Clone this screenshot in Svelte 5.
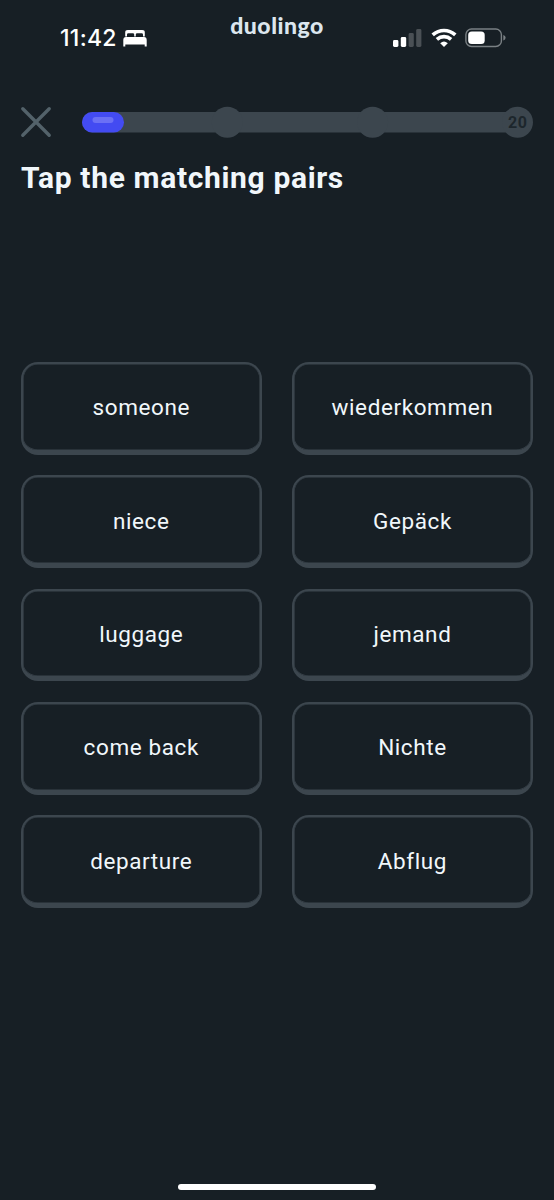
<script lang="ts">
	const rows = [
		['someone', 'wiederkommen'],
		['niece', 'Gepäck'],
		['luggage', 'jemand'],
		['come back', 'Nichte'],
		['departure', 'Abflug']
	];
</script>

<main class="screen">
	<header class="status">
		<div class="clock">
			<span class="time">11:42</span>
			<svg class="bed" width="24" height="18" viewBox="0 0 24 18" fill="white" aria-hidden="true">
				<path d="M2.2 7.4V3.4Q2.2 1 4.8 1H19.2Q21.8 1 21.8 3.4V7.4H20V5.6Q20 4.2 18.6 4.2H14.2Q12.8 4.2 12.8 5.6V7.4H11.2V5.6Q11.2 4.2 9.8 4.2H5.4Q4 4.2 4 5.6V7.4Z" />
				<path d="M3 8H21Q23.7 8 23.7 11V17.4H21.7V15.4H2.3V17.4H.3V11Q.3 8 3 8Z" />
			</svg>
		</div>
		<div class="brand">duolingo</div>
		<div class="indicators">
			<svg width="29" height="20" viewBox="0 0 29 20" aria-hidden="true">
				<rect x="0" y="12" width="5.4" height="7" rx="1.4" fill="white" />
				<rect x="7.8" y="9" width="5.4" height="10" rx="1.4" fill="white" />
				<rect x="15.6" y="5" width="5.2" height="14" rx="1.4" fill="#4a5055" />
				<rect x="23.2" y="1" width="5.2" height="18" rx="1.4" fill="#4a5055" />
			</svg>
			<svg class="wifi" width="26" height="20" viewBox="0 0 26 20" fill="none" stroke="white" stroke-width="3.7" aria-hidden="true">
				<path d="M1.7 6.9Q6.8 2.5 13 2.5T24.3 6.9" />
				<path d="M5.9 11.3Q9.1 8.6 13 8.6T20.1 11.3" />
				<path d="M13 19L9.2 15.2Q13 11.8 16.8 15.2Z" fill="white" stroke="none" />
			</svg>
			<svg class="battery" width="41" height="20" viewBox="0 0 41 20" aria-hidden="true">
				<rect x=".9" y="1" width="35.5" height="17.5" rx="5.6" fill="none" stroke="#7a8084" stroke-width="1.4" />
				<rect x="3.2" y="3.4" width="16.5" height="12.7" rx="3.6" fill="white" />
				<path d="M38.3 7Q40.6 7.5 40.6 9.8T38.3 12.6Z" fill="#7a8084" />
			</svg>
		</div>
	</header>

	<div class="lesson">
		<svg width="32" height="32" viewBox="0 0 32 32" aria-hidden="true">
			<path d="M2.8 2.8L29.2 29.2M29.2 2.8L2.8 29.2" stroke="#53626a" stroke-width="3.4" stroke-linecap="round" />
		</svg>
		<svg class="progress" width="452" height="32" viewBox="0 0 452 32" aria-hidden="true">
			<rect x="0" y="6" width="445" height="20.5" rx="10.2" fill="#3c464e" />
			<circle cx="145.3" cy="16.3" r="15.5" fill="#3c464e" />
			<circle cx="290.6" cy="16.3" r="15.5" fill="#3c464e" />
			<circle cx="435.5" cy="16.3" r="15.5" fill="#3c464e" />
			<rect x="0" y="6" width="42" height="20.5" rx="10.2" fill="#434bf2" />
			<rect x="10.5" y="11" width="21" height="6" rx="3" fill="#6b70f5" />
			<text x="426" y="22" textLength="19" class="count">20</text>
		</svg>
	</div>

	<h1>Tap the matching pairs</h1>

	<div class="pairs">
		{#each rows as row}
			{#each row as word}
				<button>{word}</button>
			{/each}
		{/each}
	</div>

	<div class="home"></div>
</main>

<style>
	:global(body) {
		background: #171f25;
	}

	.screen {
		box-sizing: border-box;
		width: 554px;
		height: 1200px;
		display: flex;
		flex-direction: column;
		background: #171f25;
		color: #f1f7fb;
		font-family: Roboto, sans-serif;
		overflow: hidden;
	}

	.status {
		display: grid;
		grid-template-columns: 170px 1fr 170px;
		height: 76px;
		color: white;
	}

	.clock {
		display: flex;
		align-items: center;
		padding-left: 60px;
		gap: 5px;
	}
	.time {
		width: 58px;
		font: 500 23px Inter, sans-serif;
		letter-spacing: 0.3px;
	}
	.bed {
		flex: none;
	}

	.brand {
		padding-top: 9px;
		text-align: center;
		color: #dce6ee;
		font: 900 23px/32px Lato, sans-serif;
		letter-spacing: 0.5px;
	}

	.indicators {
		display: flex;
		align-items: center;
		padding-left: 9px;
	}
	.wifi {
		margin-left: 9px;
	}
	.battery {
		margin-left: 8px;
	}

	.lesson {
		display: flex;
		align-items: center;
		gap: 30px;
		margin: 30px 0 0 20px;
	}
	.count {
		fill: #1d262c;
		font-size: 16px;
		font-weight: 700;
	}

	h1 {
		margin: 20px 0 0 21px;
		font-size: 30px;
		line-height: 40px;
		font-weight: 700;
		letter-spacing: 0.65px;
		white-space: nowrap;
	}

	.pairs {
		display: grid;
		grid-template-columns: 240.5px 240.5px;
		grid-auto-rows: 92.8px;
		gap: 20.5px 30.7px;
		margin: 164px 0 0 21px;
	}

	button {
		box-sizing: border-box;
		margin: 0;
		padding: 1px 0 0;
		border: 2px solid #3c464e;
		border-bottom-width: 5px;
		border-radius: 17px;
		background: none;
		box-shadow: inset 0 0 0 0.6px #3c464e;
		color: inherit;
		font: 400 22.5px Roboto, sans-serif;
		letter-spacing: 0.6px;
	}

	.home {
		width: 198px;
		height: 6.5px;
		margin: auto auto 10px;
		border-radius: 4px;
		background: white;
	}
</style>
